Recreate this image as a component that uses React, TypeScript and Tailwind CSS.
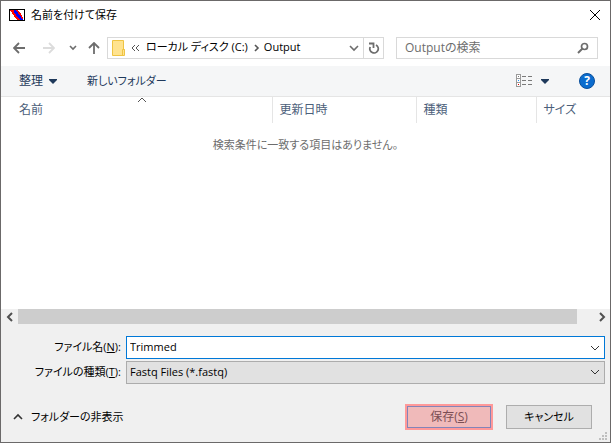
import React, { useState } from "react";

const columns = [
  { key: "name", label: "名前", width: "", sorted: true },
  { key: "date", label: "更新日時", width: "w-36", sorted: false },
  { key: "type", label: "種類", width: "w-30", sorted: false },
  { key: "size", label: "サイズ", width: "w-[74px]", sorted: false },
];

function Chevron({ className, d = "M1 3l4 4 4-4", thickness = 1 }: { className?: string; d?: string; thickness?: number }) {
  return (
    <svg viewBox="0 0 10 10" fill="none" stroke="currentColor" strokeWidth={thickness} className={`h-[10px] w-[10px] shrink-0 ${className ?? ""}`}>
      <path d={d} />
    </svg>
  );
}

function Arrow({ d }: { d: string }) {
  return (
    <svg viewBox="0 0 12 12" fill="none" stroke="currentColor" strokeWidth="1.8" className="h-3 w-3">
      <path d={d} />
    </svg>
  );
}

function Caret() {
  return (
    <svg viewBox="0 0 8 5" fill="currentColor" className="h-[5px] w-2">
      <path d="M0 0h8v1L4 5 0 1z" />
    </svg>
  );
}

function AppIcon() {
  return (
    <svg viewBox="0 0 16 12" shapeRendering="crispEdges" className="h-3 w-4 shrink-0">
      <rect width="16" height="12" fill="#000" />
      <rect x="1" y="1" width="14" height="10" fill="#fff" />
      <path fill="#f00" d="M1 1h4v1H1zM2 2h3v1H2zM3 3h2v1H3zM3 4h3v1H3zM4 5h3v1H4zM5 6h2v1H5zM5 7h3v1H5zM6 8h3v1H6zM7 9h3v1H7zM8 10h3v1H8z" />
      <path fill="#00f" d="M5 1h2v1H5zM5 2h3v1H5zM5 3h4v1H5zM6 4h3v1H6zM7 5h3v1H7zM7 6h4v1H7zM8 7h4v1H8zM9 8h3v1H9zM10 9h3v1h-3zM11 10h3v1h-3z" />
      <path fill="#f00" d="M7 1h2v1H7zM8 2h2v1H8zM9 3h2v1H9zM9 4h3v1H9zM10 5h2v1h-2zM11 6h2v1h-2zM12 7h1v1h-1zM12 8h2v1h-2zM13 9h1v1h-1z" />
    </svg>
  );
}

function FolderIcon() {
  return (
    <svg viewBox="0 0 14 16" className="h-4 w-[14px] shrink-0">
      <path d="M.5.5h11v9h1v6H.5z" fill="#ffe38f" stroke="#efc443" />
      <path d="M10.500 15V9.500h2" stroke="#efc443" fill="none" />
    </svg>
  );
}

export default function App() {
  const [fileName, setFileName] = useState("Trimmed");
  const [search, setSearch] = useState("");

  return (
    <div className="flex min-h-screen flex-col border border-[#6b6969] bg-white font-['Open_Sans','Noto_Sans_CJK_JP',sans-serif] text-[11px] text-black [font-feature-settings:'palt']">
      {/* Title bar */}
      <header className="flex h-7 items-center gap-[6px] pr-[9px] pl-2">
        <AppIcon />
        <h1 className="flex-1">名前を付けて保存</h1>
        <button type="button" aria-label="閉じる">
          <svg viewBox="0 0 12 12" stroke="currentColor" className="h-3 w-3">
            <path d="M1 1l10 10M11 1L1 11" />
          </svg>
        </button>
      </header>

      {/* Address bar and search */}
      <nav className="flex h-[37px] items-center px-3 text-[#6d6d6d]">
        <button type="button" aria-label="戻る" className="mr-[18px]">
          <Arrow d="M12 6H1.500M6 1L1 6l5 5" />
        </button>
        <button type="button" aria-label="進む" className="mr-[13px] text-[#dcdcdc]">
          <Arrow d="M0 6h10.500M6 1l5 5-5 5" />
        </button>
        <button type="button" aria-label="最近の場所" className="mr-[10px]">
          <Chevron d="M2 3l3 3 3-3" thickness={1.6} />
        </button>
        <button type="button" aria-label="上へ" className="mr-[7px]">
          <Arrow d="M6 12V1.500M1 6l5-5 5 5" />
        </button>
        <div className="flex h-[22px] flex-1 items-center border border-[#d9d9d9]">
          <div className="flex flex-1 items-center pl-1 text-black">
            <FolderIcon />
            <svg viewBox="0 0 9 8" fill="none" stroke="#555" className="mr-[6px] ml-[5px] h-2 w-[9px]">
              <path d="M4 1L1 4l3 3M8 1L5 4l3 3" />
            </svg>
            <a href="#disk" className="whitespace-nowrap">ローカル ディスク (C:)</a>
            <Chevron className="mx-[3px] text-[#555]" d="M4 2l3 3-3 3" thickness={1.6} />
            <a href="#output">Output</a>
          </div>
          <button type="button" aria-label="履歴" className="mr-1">
            <Chevron d="M1 3l4 4 4-4" thickness={1.6} />
          </button>
          <button type="button" aria-label="更新" className="flex h-full w-5 items-center justify-center border-l border-[#d9d9d9]">
            <svg viewBox="0 0 12 12" fill="none" stroke="currentColor" strokeWidth="1.8" className="h-3 w-3">
              <path d="M1 1.500h4.500V6M2.200 5A4.200 4.200 0 1 0 8 3" />
            </svg>
          </button>
        </div>
        <label className="ml-3 flex h-[22px] w-[202px] items-center border border-[#d9d9d9] px-2">
          <input
            aria-label="Outputの検索"
            placeholder="Outputの検索"
            value={search}
            onChange={(e) => setSearch(e.target.value)}
            className="w-0 flex-1 text-xs outline-none placeholder:text-[#6d6d6d]"
          />
          <svg viewBox="0 0 12 12" fill="none" stroke="currentColor" strokeWidth="2" className="h-3 w-3">
            <circle cx="7.500" cy="4.500" r="3" strokeWidth="1.700" />
            <path d="M5.500 6.500L1 11" />
          </svg>
        </label>
      </nav>

      {/* Toolbar */}
      <div className="flex h-[31px] items-center border-b border-[#e5e5e5] bg-[#f5f6f7] pr-[15px] pl-[18px] text-[#1e395b]">
        <button type="button" className="mr-[30px] flex items-center gap-[6px] text-xs">
          整理
          <Caret />
        </button>
        <button type="button">新しいフォルダー</button>
        <button type="button" aria-label="表示方法" className="ml-auto flex items-center gap-2">
          <svg viewBox="0 0 17 14" className="h-[14px] w-[17px]" shapeRendering="crispEdges">
            <path d="M.5.5h4v12h-4zM.5 4.500h4M.5 8.500h4" fill="#fff" stroke="#9a9a9a" />
            <path d="M2 2h1v1H2z" fill="#777" />
            <path d="M2 6h1v1H2z" fill="#1e90ff" />
            <path d="M2 10h1v1H2z" fill="#d00" />
            <path d="M6 2.500h4M12 2.500h4M6 6.500h4M12 6.500h4M6 10.500h4M12 10.500h4" stroke="#7a7a7a" />
          </svg>
          <Caret />
        </button>
        <button
          type="button"
          aria-label="ヘルプ"
          className="ml-[30px] flex h-4 w-4 items-center justify-center rounded-full border border-[#0a4f9c] bg-[#0b6cce] text-xs font-bold text-white"
        >
          ?
        </button>
      </div>

      {/* File list */}
      <main className="flex-1">
        <table className="w-full table-fixed border-collapse">
          <thead>
            <tr className="h-[26px] text-xs text-[#4c607a]">
              {columns.map((col) => (
                <th
                  key={col.key}
                  scope="col"
                  className={`relative border-r border-[#e5e5e5] p-0 pl-[7px] text-left font-normal first:pl-[18px] last:border-r-0 ${col.width}`}
                >
                  {col.label}
                  {col.sorted && (
                    <Chevron className="absolute -top-[2px] left-1/2 ml-px text-[#555]" d="M1 7l4-4 4 4" />
                  )}
                </th>
              ))}
            </tr>
          </thead>
          <tbody>
            <tr>
              <td colSpan={4} className="pt-[14px] text-center leading-4 text-[#6d6d6d]">
                検索条件に一致する項目はありません。
              </td>
            </tr>
          </tbody>
        </table>
      </main>

      {/* Horizontal scrollbar */}
      <div className="flex h-[15px] items-center bg-[#f0f0f0] text-[#505050]">
        <button type="button" aria-label="左へスクロール" className="flex w-[17px] justify-center">
          <Chevron d="M7 1L3 5l4 4" thickness={2} />
        </button>
        <div className="h-full flex-1 pr-4">
          <div className="h-full bg-[#cdcdcd]" />
        </div>
        <button type="button" aria-label="右へスクロール" className="flex w-[17px] justify-center">
          <Chevron d="M3 1l4 4-4 4" thickness={2} />
        </button>
      </div>

      {/* File name, type and actions */}
      <form className="relative bg-[#f0f0f0] pt-3" onSubmit={(e) => e.preventDefault()}>
        <div className="grid grid-cols-[120px_1fr] items-center gap-x-[5px] gap-y-[2px] pr-[5px]">
          <label htmlFor="file-name" className="text-right">
            ファイル名(<u>N</u>):
          </label>
          <div className="flex h-[23px] items-center border border-[#0078d7] bg-white pr-1 pl-[3px]">
            <input
              id="file-name"
              value={fileName}
              onChange={(e) => setFileName(e.target.value)}
              className="w-0 flex-1 outline-none"
            />
            <button type="button" aria-label="履歴を表示" className="text-[#333]">
              <Chevron />
            </button>
          </div>
          <label htmlFor="file-type" className="text-right">
            ファイルの種類(<u>T</u>):
          </label>
          <div className="relative flex h-[23px]">
            <select id="file-type" className="w-full appearance-none border border-[#acacac] bg-[#e1e1e1] pr-5 pl-[3px]">
              <option>Fastq Files (*.fastq)</option>
            </select>
            <Chevron className="pointer-events-none absolute top-[6px] right-[5px] text-[#333]" />
          </div>
        </div>

        <div className="flex items-center pt-5 pr-[18px] pb-3 pl-3">
          <button type="button" className="flex items-center gap-2">
            <Chevron className="text-[#333]" d="M1 7l4-4 4 4" thickness={1.6} />
            フォルダーの非表示
          </button>
          <button
            type="submit"
            className="ml-auto h-[26px] w-[88px] border-2 border-[#ff9999] bg-[#f0baba] text-xs text-[#7b4f55] outline outline-offset-[-3px] outline-[#8484b8]"
          >
            保存(<u>S</u>)
          </button>
          <button type="button" className="ml-[13px] h-6 w-[86px] border border-[#adadad] bg-[#e1e1e1]">
            キャンセル
          </button>
        </div>

        {/* Resize grip */}
        <svg viewBox="0 0 8 8" fill="#bfbfbf" shapeRendering="crispEdges" className="absolute right-[3px] bottom-[2px] h-2 w-2">
          <path d="M6 0h2v2H6zM3 3h2v2H3zM6 3h2v2H6zM0 6h2v2H0zM3 6h2v2H3zM6 6h2v2H6z" />
        </svg>
      </form>
    </div>
  );
}
